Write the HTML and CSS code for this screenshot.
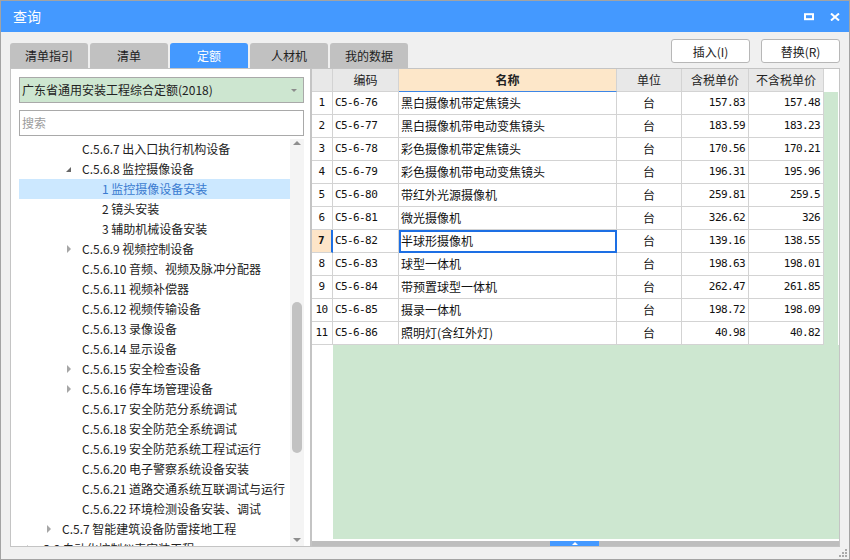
FILE: index.html
```html
<!DOCTYPE html>
<html lang="zh-CN">
<head>
<meta charset="utf-8">
<title>查询</title>
<link rel="stylesheet" href="styles.css">
</head>
<body>
<div class="window">
  <div class="titlebar">
    <span class="title">查询</span>
    <div class="win-btns">
      <svg class="ico" width="10" height="8" viewBox="0 0 10 8"><rect x="1" y="1.2" width="8" height="5" fill="none" stroke="#fff" stroke-width="2"/></svg>
      <svg class="ico" width="10" height="8" viewBox="0 0 10 8"><path d="M1 0.5 L9 7.5 M9 0.5 L1 7.5" stroke="#fff" stroke-width="2" fill="none"/></svg>
    </div>
  </div>

  <div class="toolbar">
    <div class="tabs">
      <div class="tab">清单指引</div>
      <div class="tab">清单</div>
      <div class="tab active">定额</div>
      <div class="tab">人材机</div>
      <div class="tab">我的数据</div>
    </div>
    <div class="actions">
      <button class="btn">插入(I)</button>
      <button class="btn">替换(R)</button>
    </div>
  </div>

  <div class="content">
    <div class="left-panel">
      <div class="select"><span>广东省通用安装工程综合定额(2018)</span><span class="caret"></span></div>
      <div class="search">搜索</div>
      <div class="tree-wrap">
        <div class="tree">
          <div class="node l3"><span class="tog"></span><span class="lbl">C.5.6.7 出入口执行机构设备</span></div>
          <div class="node l3"><span class="tog open"></span><span class="lbl">C.5.6.8 监控摄像设备</span></div>
          <div class="node l4 sel"><span class="tog"></span><span class="lbl">1 监控摄像设备安装</span></div>
          <div class="node l4"><span class="tog"></span><span class="lbl">2 镜头安装</span></div>
          <div class="node l4"><span class="tog"></span><span class="lbl">3 辅助机械设备安装</span></div>
          <div class="node l3"><span class="tog closed"></span><span class="lbl">C.5.6.9 视频控制设备</span></div>
          <div class="node l3"><span class="tog"></span><span class="lbl">C.5.6.10 音频、视频及脉冲分配器</span></div>
          <div class="node l3"><span class="tog"></span><span class="lbl">C.5.6.11 视频补偿器</span></div>
          <div class="node l3"><span class="tog"></span><span class="lbl">C.5.6.12 视频传输设备</span></div>
          <div class="node l3"><span class="tog"></span><span class="lbl">C.5.6.13 录像设备</span></div>
          <div class="node l3"><span class="tog"></span><span class="lbl">C.5.6.14 显示设备</span></div>
          <div class="node l3"><span class="tog closed"></span><span class="lbl">C.5.6.15 安全检查设备</span></div>
          <div class="node l3"><span class="tog closed"></span><span class="lbl">C.5.6.16 停车场管理设备</span></div>
          <div class="node l3"><span class="tog"></span><span class="lbl">C.5.6.17 安全防范分系统调试</span></div>
          <div class="node l3"><span class="tog"></span><span class="lbl">C.5.6.18 安全防范全系统调试</span></div>
          <div class="node l3"><span class="tog"></span><span class="lbl">C.5.6.19 安全防范系统工程试运行</span></div>
          <div class="node l3"><span class="tog"></span><span class="lbl">C.5.6.20 电子警察系统设备安装</span></div>
          <div class="node l3"><span class="tog"></span><span class="lbl">C.5.6.21 道路交通系统互联调试与运行</span></div>
          <div class="node l3"><span class="tog"></span><span class="lbl">C.5.6.22 环境检测设备安装、调试</span></div>
          <div class="node l2"><span class="tog closed"></span><span class="lbl">C.5.7 智能建筑设备防雷接地工程</span></div>
          <div class="node l1"><span class="tog closed"></span><span class="lbl">C.6 自动化控制仪表安装工程</span></div>
        </div>
        <div class="vscroll">
          <span class="arr up"></span>
          <div class="vtrack"><div class="vthumb"></div></div>
          <span class="arr down"></span>
        </div>
      </div>
    </div>

    <div class="right-panel">
      <div class="grid">
        <div class="row head">
          <div class="c num"></div>
          <div class="c ctr">编码</div>
          <div class="c ctr focus-col">名称</div>
          <div class="c ctr">单位</div>
          <div class="c ctr">含税单价</div>
          <div class="c ctr">不含税单价</div>
          <div class="c pad"></div>
        </div>
        <div class="row"><div class="c num">1</div><div class="c code">C5-6-76</div><div class="c name">黑白摄像机带定焦镜头</div><div class="c ctr">台</div><div class="c amt">157.83</div><div class="c amt">157.48</div><div class="c pad"></div></div>
        <div class="row"><div class="c num">2</div><div class="c code">C5-6-77</div><div class="c name">黑白摄像机带电动变焦镜头</div><div class="c ctr">台</div><div class="c amt">183.59</div><div class="c amt">183.23</div><div class="c pad"></div></div>
        <div class="row"><div class="c num">3</div><div class="c code">C5-6-78</div><div class="c name">彩色摄像机带定焦镜头</div><div class="c ctr">台</div><div class="c amt">170.56</div><div class="c amt">170.21</div><div class="c pad"></div></div>
        <div class="row"><div class="c num">4</div><div class="c code">C5-6-79</div><div class="c name">彩色摄像机带电动变焦镜头</div><div class="c ctr">台</div><div class="c amt">196.31</div><div class="c amt">195.96</div><div class="c pad"></div></div>
        <div class="row"><div class="c num">5</div><div class="c code">C5-6-80</div><div class="c name">带红外光源摄像机</div><div class="c ctr">台</div><div class="c amt">259.81</div><div class="c amt">259.5</div><div class="c pad"></div></div>
        <div class="row"><div class="c num">6</div><div class="c code">C5-6-81</div><div class="c name">微光摄像机</div><div class="c ctr">台</div><div class="c amt">326.62</div><div class="c amt">326</div><div class="c pad"></div></div>
        <div class="row current"><div class="c num">7</div><div class="c code">C5-6-82</div><div class="c name focus">半球形摄像机</div><div class="c ctr">台</div><div class="c amt">139.16</div><div class="c amt">138.55</div><div class="c pad"></div></div>
        <div class="row"><div class="c num">8</div><div class="c code">C5-6-83</div><div class="c name">球型一体机</div><div class="c ctr">台</div><div class="c amt">198.63</div><div class="c amt">198.01</div><div class="c pad"></div></div>
        <div class="row"><div class="c num">9</div><div class="c code">C5-6-84</div><div class="c name">带预置球型一体机</div><div class="c ctr">台</div><div class="c amt">262.47</div><div class="c amt">261.85</div><div class="c pad"></div></div>
        <div class="row"><div class="c num">10</div><div class="c code">C5-6-85</div><div class="c name">摄录一体机</div><div class="c ctr">台</div><div class="c amt">198.72</div><div class="c amt">198.09</div><div class="c pad"></div></div>
        <div class="row"><div class="c num">11</div><div class="c code">C5-6-86</div><div class="c name">照明灯(含红外灯)</div><div class="c ctr">台</div><div class="c amt">40.98</div><div class="c amt">40.82</div><div class="c pad"></div></div>
        <div class="filler"><div class="filler-num"></div><div class="filler-green"></div></div>
      </div>
      <div class="hscroll"><div class="hthumb"><span class="hthumb-arrow"></span></div></div>
    </div>
  </div>

  <div class="statusbar">
    <svg class="grip" width="8" height="8" viewBox="0 0 8 8">
      <rect x="6" y="0" width="2" height="2" fill="#a9a9a9"/>
      <rect x="3" y="3" width="2" height="2" fill="#a9a9a9"/>
      <rect x="6" y="3" width="2" height="2" fill="#a9a9a9"/>
      <rect x="0" y="6" width="2" height="2" fill="#a9a9a9"/>
      <rect x="3" y="6" width="2" height="2" fill="#a9a9a9"/>
      <rect x="6" y="6" width="2" height="2" fill="#a9a9a9"/>
    </svg>
  </div>
</div>
</body>
</html>
```

FILE: styles.css
```css
* { box-sizing: border-box; }
html, body { margin: 0; padding: 0; }
body {
  width: 850px;
  height: 560px;
  font-family: "Noto Sans CJK SC", "Noto Sans", sans-serif;
  font-size: 12px;
  color: #222;
  background: #ffffff;
  overflow: hidden;
}

.window {
  width: 850px;
  height: 560px;
  border: 1px solid #a3a3a3;
  background: #f0f0f0;
  display: flex;
  flex-direction: column;
}

/* title bar */
.titlebar {
  flex: none;
  height: 31px;
  background: #4499ff;
  color: #fff;
  display: flex;
  align-items: center;
  justify-content: space-between;
  padding: 0 9px 0 12px;
}
.title { font-size: 14px; line-height: 31px; }
.win-btns { display: flex; align-items: center; gap: 16px; margin-top: 1px; }
.ico { display: block; }

/* toolbar with tabs and buttons */
.toolbar {
  flex: none;
  height: 36px;
  padding: 7px 9px 0 9px;
  display: flex;
  justify-content: space-between;
}
.tabs { display: flex; gap: 2px; align-self: flex-end; }
.tab {
  width: 78px;
  height: 25px;
  line-height: 25px;
  text-align: center;
  background: #c1c1c1;
  color: #222;
  border-radius: 3px 3px 0 0;
  font-size: 12px;
}
.tab.active { background: #4499ff; color: #fff; }
.actions { display: flex; gap: 11px; align-self: flex-start; }
.btn {
  width: 79px;
  height: 24px;
  padding: 0;
  background: #fff;
  border: 1px solid #b7b7b7;
  border-radius: 3px;
  font-family: "Noto Sans CJK SC", "Noto Sans", sans-serif;
  font-size: 12px;
  color: #222;
}

/* main content */
.content {
  flex: none;
  height: 479px;
  padding: 0 9px;
  display: flex;
}

/* left panel */
.left-panel {
  width: 301px;
  flex: none;
  background: #fff;
  border: 1px solid #c4c4c4;
  padding: 8px 6px 0 8px;
  display: flex;
  flex-direction: column;
  overflow: hidden;
}
.select {
  flex: none;
  height: 26px;
  background: #cde6d0;
  border: 1px solid #a9a9a9;
  display: flex;
  align-items: center;
  justify-content: space-between;
  padding: 0 6px 0 2px;
  line-height: 24px;
  white-space: nowrap;
}
.caret {
  width: 0;
  height: 0;
  border-left: 3px solid transparent;
  border-right: 3px solid transparent;
  border-top: 3px solid #8c8c8c;
}
.search {
  flex: none;
  margin-top: 7px;
  height: 26px;
  border: 1px solid #a9a9a9;
  background: #fff;
  color: #9c9c9c;
  padding-left: 2px;
  line-height: 24px;
}
.tree-wrap {
  flex: 1;
  min-height: 0;
  margin-top: 3px;
  display: flex;
  overflow: hidden;
}
.tree { width: 271px; flex: none; overflow: hidden; }
.node {
  height: 20px;
  line-height: 20px;
  display: flex;
  align-items: center;
  white-space: nowrap;
  color: #222;
}
.node.l1 { padding-left: 3px; }
.node.l2 { padding-left: 23px; }
.node.l3 { padding-left: 43px; }
.node.l4 { padding-left: 63px; }
.node.sel { background: #cce8ff; color: #3a7bd0; }
.tog { width: 20px; flex: none; height: 20px; position: relative; }
.tog.closed::before {
  content: "";
  position: absolute;
  left: 5px;
  top: 6px;
  border-left: 4px solid #a6a6a6;
  border-top: 4px solid transparent;
  border-bottom: 4px solid transparent;
}
.tog.open::before {
  content: "";
  position: absolute;
  left: 4px;
  top: 8px;
  border-right: 5px solid #676767;
  border-top: 5px solid transparent;
}

.vscroll {
  width: 14px;
  flex: none;
  background: #f4f4f4;
  display: flex;
  flex-direction: column;
  align-items: center;
}
.arr { width: 0; height: 0; flex: none; border-left: 4px solid transparent; border-right: 4px solid transparent; }
.arr.up { margin-top: 2px; border-bottom: 4px solid #8e8e8e; }
.arr.down { margin-bottom: 4px; border-top: 4px solid #8e8e8e; }
.vtrack { flex: 1; width: 100%; display: flex; justify-content: center; }
.vthumb {
  width: 10px;
  height: 151px;
  margin-top: 157px;
  background: #c2c2c2;
  border-radius: 5px;
}

/* right panel: grid */
.right-panel {
  width: 529px;
  flex: none;
  background: #fff;
  border: 1px solid #c4c4c4;
  display: flex;
  flex-direction: column;
}
.grid { flex: 1; display: flex; flex-direction: column; min-height: 0; }
.row {
  flex: none;
  display: grid;
  grid-template-columns: 21px 66px 218px 65px 67px 75px 14px;
  height: 23px;
}
.c {
  border-right: 1px solid #d3d3d3;
  border-bottom: 1px solid #d3d3d3;
  line-height: 22px;
  white-space: nowrap;
  overflow: hidden;
  font-size: 12px;
  color: #111;
}
.head .c { background: #e8e8e8; color: #222; }
.head .c.focus-col { background: #fde7c9; font-weight: bold; border-bottom-color: #3d86e6; }
.head .c.pad { background: #fff; }
.c.pad { border: none; background: #cde7d0; }
.ctr { text-align: center; }
.num {
  text-align: center;
  font-family: "DejaVu Sans Mono", "Liberation Mono", monospace;
  font-size: 11px;
  letter-spacing: -0.6px;
  padding-right: 1px;
}
.code {
  padding-left: 2px;
  font-family: "DejaVu Sans Mono", "Liberation Mono", monospace;
  font-size: 11px;
  letter-spacing: -0.6px;
}
.name { padding-left: 2px; }
.amt {
  text-align: right;
  padding-right: 3px;
  font-family: "DejaVu Sans Mono", "Liberation Mono", monospace;
  font-size: 11px;
  letter-spacing: -0.6px;
}
.row.current .num {
  background: #fde5c8;
  font-weight: bold;
  border-right: 2px solid #1d6fe4;
}
.c.focus { outline: 2px solid #1d6fe4; outline-offset: -2px; }

.filler { flex: 1; display: flex; }
.filler-num { width: 21px; flex: none; background: #fff; }
.filler-green { flex: 1; background: #cde7d0; }

.hscroll {
  flex: none;
  height: 5px;
  margin-top: 2px;
  background: #bebebe;
  display: flex;
}
.hthumb {
  width: 49px;
  height: 5px;
  margin-left: 238px;
  background: #4499ff;
  display: flex;
  justify-content: center;
  align-items: center;
}
.hthumb-arrow {
  width: 0;
  height: 0;
  border-left: 3px solid transparent;
  border-right: 3px solid transparent;
  border-bottom: 3px solid #fff;
}

.statusbar {
  flex: 1;
  display: flex;
  justify-content: flex-end;
  align-items: flex-end;
  padding: 0 2px 2px 0;
}
.grip { display: block; }
```
